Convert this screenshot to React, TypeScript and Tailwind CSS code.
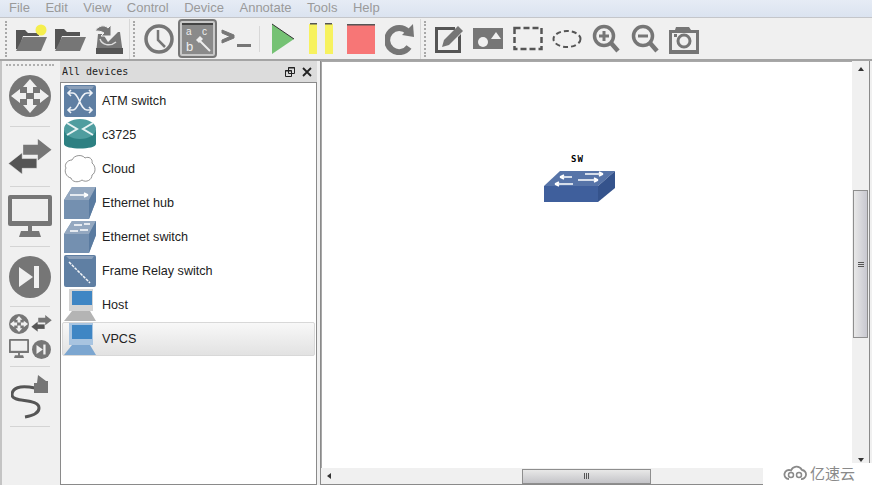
import React from 'react'

const GRAY = '#767676'
const DARK = '#555555'

const menus = ['File', 'Edit', 'View', 'Control', 'Device', 'Annotate', 'Tools', 'Help']

// top toolbar drawings
const NewProject = () => (
  <svg width="34" height="34" viewBox="0 0 34 34">
    <path d="M2 27V8h9l3 3h11v3H9L5 27z" fill={DARK} />
    <path d="M9 15h24l-6 14H2z" fill={GRAY} />
    <circle cx="27" cy="8" r="5.5" fill="#f5ee4d" />
  </svg>
)
const OpenProject = () => (
  <svg width="34" height="34" viewBox="0 0 34 34">
    <path d="M2 27V7h9l3 3h13v4H9L5 27z" fill={DARK} />
    <path d="M9 15h24l-6 14H2z" fill={GRAY} />
  </svg>
)
const SaveProject = () => (
  <svg width="34" height="34" viewBox="0 0 34 34">
    <path d="M4 32l2-20h5l5 8 10-10h2l3 22z" fill={GRAY} />
    <path d="M4 26h27v6H4z" fill={DARK} />
    <path d="M3 9c3-5 9-7 13-3l3-3v11h-10l3-3c-3-2-6-2-9-2z" fill={GRAY} stroke="#f0f0f0" />
    <path d="M8 17c2 6 10 8 16 3" fill="none" stroke="#ddd" strokeWidth="1.5" />
  </svg>
)
const Clock = () => (
  <svg width="34" height="34" viewBox="0 0 34 34">
    <circle cx="17" cy="17" r="13" fill="#f0f0f0" stroke={GRAY} strokeWidth="3.5" />
    <path d="M16 8v10l7 7" fill="none" stroke={GRAY} strokeWidth="2.5" />
  </svg>
)
const Notes = () => (
  <svg width="31" height="31" viewBox="0 0 31 31">
    <rect width="31" height="31" fill="#8a8a8a" />
    <rect width="31" height="2" fill="#444" />
    <text x="4" y="12" fontSize="10" fill="#eee" fontFamily="Liberation Sans">a</text>
    <text x="20" y="12" fontSize="10" fill="#eee" fontFamily="Liberation Sans">c</text>
    <text x="4" y="28" fontSize="13" fill="#eee" fontFamily="Liberation Sans">b</text>
    <path d="M14 17l4-4 3 3-4 4z" fill="#eee" />
    <path d="M18 18l10 10" stroke="#eee" strokeWidth="2" />
  </svg>
)
const Console = () => (
  <svg width="34" height="34" viewBox="0 0 34 34">
    <path d="M2 8l12 5v3L2 21v-3l8-3.500L2 11z" fill={GRAY} stroke={GRAY} />
    <rect x="17" y="22" width="14" height="3" fill={GRAY} />
  </svg>
)
const Play = () => (
  <svg width="26" height="34" viewBox="0 0 26 34">
    <path d="M2 2l22 15L2 32z" fill="#75c274" />
    <path d="M2 2l22 15" stroke="#333" strokeWidth="1" fill="none" />
  </svg>
)
const Pause = () => (
  <svg width="26" height="32" viewBox="0 0 26 32">
    <rect x="0" y="1" width="8" height="30" fill="#f7f25f" />
    <rect x="16" y="1" width="8" height="30" fill="#f7f25f" />
    <rect x="1" y="0" width="7" height="1.500" fill="#555" />
    <rect x="16" y="0" width="7" height="1.500" fill="#555" />
  </svg>
)
const Stop = () => (
  <svg width="28" height="30" viewBox="0 0 28 30">
    <rect width="28" height="30" fill="#f77676" />
    <rect width="28" height="1.500" fill="#555" />
  </svg>
)
const Reload = () => (
  <svg width="30" height="32" viewBox="0 0 30 32">
    <path d="M24 24a12 12 0 1 1-1-15" fill="none" stroke={GRAY} strokeWidth="6" />
    <path d="M17 12L29 14 28 1z" fill={GRAY} />
  </svg>
)
const AddNote = () => (
  <svg width="32" height="32" viewBox="0 0 32 32">
    <path d="M1 4h20v3H4v20h20V14l3-3v19H1z" fill={DARK} />
    <path d="M8 24l2-7L24 3l5 5-14 14z" fill={GRAY} />
  </svg>
)
const AddImage = () => (
  <svg width="32" height="24" viewBox="0 0 32 24">
    <rect width="30" height="21" y="1" fill={GRAY} />
    <circle cx="10" cy="15" r="5" fill="#f0f0f0" />
    <path d="M18 12l5-7 5 7z" fill="#f0f0f0" />
  </svg>
)
const DrawRect = () => (
  <svg width="30" height="26" viewBox="0 0 30 26">
    <rect x="1.500" y="2" width="27" height="21" fill="none" stroke={DARK} strokeWidth="2.500" strokeDasharray="6 3" />
  </svg>
)
const DrawEllipse = () => (
  <svg width="30" height="22" viewBox="0 0 30 22">
    <ellipse cx="15" cy="11" rx="13.500" ry="8" fill="none" stroke={DARK} strokeWidth="2" strokeDasharray="5 3" />
  </svg>
)
const Zoom = ({ plus }: { plus?: boolean }) => (
  <svg width="28" height="30" viewBox="0 0 28 30">
    <circle cx="12" cy="12" r="9.500" fill="#f0f0f0" stroke={GRAY} strokeWidth="3.500" />
    <path d="M19 19l7 8" stroke={GRAY} strokeWidth="4.500" />
    <path d="M7 12h10" stroke={GRAY} strokeWidth="3" />
    {plus && <path d="M12 7v10" stroke={GRAY} strokeWidth="3" />}
  </svg>
)
const Camera = () => (
  <svg width="32" height="30" viewBox="0 0 32 30">
    <path d="M1 6h6l1-3h13l2 3h8v24H1z" fill={GRAY} />
    <rect x="4" y="9" width="24" height="17" fill="#f0f0f0" />
    <circle cx="16" cy="17" r="6" fill="#f0f0f0" stroke={GRAY} strokeWidth="3" />
    <rect x="6" y="10" width="3" height="3" fill={GRAY} />
  </svg>
)

// left toolbar drawings
const RouterIcon = ({ s = 42 }: { s?: number }) => (
  <svg width={s} height={s} viewBox="0 0 42 42">
    <circle cx="21" cy="21" r="21" fill={GRAY} />
    <path d="M21 4l7 8h-4v6h-6v-6h-4zM21 38l7-8h-4v-6h-6v6h-4zM2 21l9-7v4h6v6h-6v4zM40 21l-9-7v4h-6v6h6v4z" fill="#f0f0f0" />
  </svg>
)
const SwitchIcon = ({ s = 44 }: { s?: number }) => (
  <svg width={s} height={s * 0.8} viewBox="0 0 44 36">
    <path d="M15 6h15V0l14 11-14 11v-6H15z" fill={GRAY} />
    <path d="M29 20H14v-6L0 25l14 11v-6h15z" fill={DARK} stroke="#f0f0f0" strokeWidth="0.500" />
  </svg>
)
const MonitorIcon = ({ s = 44 }: { s?: number }) => (
  <svg width={s} height={s} viewBox="0 0 44 44">
    <rect x="0" y="0" width="44" height="31" rx="2" fill={GRAY} />
    <rect x="4" y="4" width="36" height="22" fill="#efefef" />
    <path d="M20 31h4v5h7l2 6H11l2-6h7z" fill={GRAY} />
  </svg>
)
const StartIcon = ({ s = 42 }: { s?: number }) => (
  <svg width={s} height={s} viewBox="0 0 42 42">
    <circle cx="21" cy="21" r="21" fill={GRAY} />
    <path d="M10 11l14 10-14 10z" fill="#f0f0f0" />
    <rect x="25" y="10" width="5" height="22" fill="#f0f0f0" />
  </svg>
)
const CableIcon = () => (
  <svg width="38" height="44" viewBox="0 0 38 44">
    <path d="M24 13C8 10 1 13 1 20c0 8 27 3 27 13 0 6-8 8-14 9" fill="none" stroke={DARK} strokeWidth="3" />
    <path d="M23 8h3L27 0l8 6h2v12H23z" fill={GRAY} />
  </svg>
)

// device icons
const AtmIcon = () => (
  <svg width="32" height="32" viewBox="0 0 32 32">
    <rect width="32" height="32" rx="2" fill="#5f7fa3" />
    <path d="M2 1h28l-2 3H5z" fill="#8ba0ba" />
    <path d="M4 8h5c6 0 7 17 14 17h5M4 25h5c6 0 7-17 14-17h5M25 5l3 3-3 3M25 22l3 3-3 3M7 5L4 8l3 3M7 22l-3 3 3 3" fill="none" stroke="#eef2f7" strokeWidth="1.600" />
  </svg>
)
const RouterDevice = () => (
  <svg width="32" height="32" viewBox="0 0 32 32">
    <path d="M0 11v14c0 6 32 6 32 0V11z" fill="#2d8082" />
    <ellipse cx="16" cy="10" rx="16" ry="10" fill="#4f9d9f" />
    <path d="M3 4l10 6-10 6M29 4l-10 6 10 6" fill="none" stroke="#e8f3f3" strokeWidth="2" />
  </svg>
)
const CloudIcon = () => (
  <svg width="32" height="32" viewBox="0 0 32 32">
    <path d="M8 7c2-5 10-6 13-2 4-2 8 1 7 5 4 3 4 10 0 12 0 5-6 8-10 5-4 3-10 2-11-2-5-1-7-7-5-10-2-3 1-8 6-8z" fill="#fff" stroke="#777" strokeWidth="0.800" />
  </svg>
)
const SlabIcon = ({ arrows }: { arrows?: 'hub' | 'sw' }) => (
  <svg width="32" height="32" viewBox="0 0 32 32">
    <path d="M8 0h24v14l-7 18H0V13z" fill="#7490b0" />
    <path d="M8 0h24l-7 13H0z" fill="#94a8c0" />
    <path d="M25 13l7-13v14l-7 18z" fill="#5a7ba0" />
    {arrows === 'hub' && <path d="M6 8h18M24 8l-4-2M24 8l-4 2" fill="none" stroke="#fff" strokeWidth="1.500" />}
    {arrows === 'sw' && <path d="M10 4h8M26 3h-6M6 10h8M24 9h-8" fill="none" stroke="#fff" strokeWidth="1.500" />}
  </svg>
)
const FrameIcon = () => (
  <svg width="32" height="32" viewBox="0 0 32 32">
    <rect width="32" height="32" rx="2" fill="#5f7fa3" />
    <path d="M2 1h28l-2 3H5z" fill="#8ba0ba" />
    <path d="M5 7l21 21" stroke="#f4f6f9" strokeWidth="1.500" strokeDasharray="3 1" />
  </svg>
)
const HostIcon = ({ tint }: { tint?: boolean }) => (
  <svg width="32" height="32" viewBox="0 0 32 32">
    <path d="M5 0h24v22H5z" fill={tint ? '#a8c4e0' : '#d4d4d4'} />
    <rect x="8" y="2" width="20" height="14" fill="#3f86c4" />
    <path d="M8 22h18l6 10H0z" fill={tint ? '#7ca6d0' : '#b4b4b4'} />
  </svg>
)

const devices: { name: string; icon: React.ReactNode }[] = [
  { name: 'ATM switch', icon: <AtmIcon /> },
  { name: 'c3725', icon: <RouterDevice /> },
  { name: 'Cloud', icon: <CloudIcon /> },
  { name: 'Ethernet hub', icon: <SlabIcon arrows="hub" /> },
  { name: 'Ethernet switch', icon: <SlabIcon arrows="sw" /> },
  { name: 'Frame Relay switch', icon: <FrameIcon /> },
  { name: 'Host', icon: <HostIcon /> },
  { name: 'VPCS', icon: <HostIcon tint /> },
]

const Handle = () => <div className="w-[3px] h-[36px] mx-[3px] border-l-2 border-dotted border-[#a8a8a8]" />
const Sep = () => <div className="h-px mx-[8px] bg-[#d4d4d4]" />
const Tool = ({ children, on }: { children: React.ReactNode; on?: boolean }) => (
  <div className={`w-[39px] h-[39px] flex items-center justify-center rounded ${on ? 'bg-[#c8c8c8] border-2 border-[#777777]' : ''}`}>
    {children}
  </div>
)
const SideSlot = ({ children, h }: { children: React.ReactNode; h: string }) => (
  <div className={`${h} flex items-center justify-center`}>{children}</div>
)

export default function App() {
  return (
    <div className="relative w-[872px] h-[485px] overflow-hidden flex flex-col bg-[#f0f0f0] font-['Liberation_Sans',sans-serif]">
      <div className="h-[18px] shrink-0 flex items-start gap-[15.5px] pl-[9px] text-[13px] leading-[15px] text-[#9a9a9a] bg-gradient-to-b from-[#e6ecf5] to-[#dbe3f0] border-b border-[#c4c6ca]">
        {menus.map((m) => (
          <span key={m}>{m}</span>
        ))}
      </div>

      <div className="h-[43px] shrink-0 flex items-center border-b-2 border-[#a4a4a4] pl-[2px]">
        <Handle />
        <Tool><NewProject /></Tool>
        <Tool><OpenProject /></Tool>
        <Tool><SaveProject /></Tool>
        <div className="w-px h-[40px] bg-[#d8d8d8] ml-[1px]" />
        <Handle />
        <Tool><Clock /></Tool>
        <Tool on><Notes /></Tool>
        <Tool><Console /></Tool>
        <div className="w-px h-[26px] bg-[#d8d8d8] mx-[3px]" />
        <Tool><Play /></Tool>
        <Tool><Pause /></Tool>
        <Tool><Stop /></Tool>
        <Tool><Reload /></Tool>
        <div className="w-px h-[40px] bg-[#d8d8d8] ml-[1px]" />
        <Handle />
        <Tool><AddNote /></Tool>
        <Tool><AddImage /></Tool>
        <Tool><DrawRect /></Tool>
        <Tool><DrawEllipse /></Tool>
        <Tool><Zoom plus /></Tool>
        <Tool><Zoom /></Tool>
        <Tool><Camera /></Tool>
      </div>

      <div className="flex-1 flex min-h-0">
        <div className="w-[60px] shrink-0 flex flex-col border-l-2 border-[#c4c4c4] pr-[2px] pt-[3px]">
          <div className="h-[2px] mx-[4px] border-t-2 border-dotted border-[#b0b0b0]" />
          <SideSlot h="h-[60px]"><RouterIcon /></SideSlot>
          <Sep />
          <SideSlot h="h-[59px]"><SwitchIcon /></SideSlot>
          <Sep />
          <SideSlot h="h-[59px]"><MonitorIcon /></SideSlot>
          <Sep />
          <SideSlot h="h-[59px]"><StartIcon /></SideSlot>
          <Sep />
          <div className="h-[59px] grid grid-cols-2 place-items-center px-[5px] py-[4px]">
            <RouterIcon s={20} />
            <SwitchIcon s={21} />
            <MonitorIcon s={20} />
            <StartIcon s={19} />
          </div>
          <Sep />
          <SideSlot h="h-[59px]"><CableIcon /></SideSlot>
          <Sep />
        </div>

        <div className="w-[257px] shrink-0 flex flex-col">
          <div className="h-[21px] shrink-0 flex items-center justify-between pl-[2px] pr-[5px] bg-[#dcdcdc] font-['DejaVu_Sans_Mono',monospace] text-[10px] text-[#222222]">
            <span>All devices</span>
            <span className="flex items-center gap-[7px]">
              <svg width="10" height="10" viewBox="0 0 10 10">
                <path d="M3.500 .5h6v6h-6zM.5 3.500h6v6h-6z" fill="#dcdcdc" stroke="#222" />
                <path d="M3 1h7M0 4h7" stroke="#222" />
              </svg>
              <svg width="10" height="10" viewBox="0 0 10 10">
                <path d="M1 1l8 8M9 1L1 9" stroke="#222" strokeWidth="1.800" />
              </svg>
            </span>
          </div>
          <div className="flex-1 bg-white border border-[#8a8a8a] flex flex-col pt-px text-[12.6px] text-[#222222]">
            {devices.map((d) => (
              <div
                key={d.name}
                className={`h-[34px] flex items-center gap-[6px] ${d.name === 'VPCS' ? 'bg-gradient-to-b from-[#f8f8f8] to-[#e2e2e2] border border-[#d8d8d8] rounded-[2px] mx-px pl-px' : 'pl-[3px]'}`}
              >
                {d.icon}
                <span>{d.name}</span>
              </div>
            ))}
          </div>
        </div>

        <div className="w-[3px] shrink-0" />

        <div className="w-[550px] shrink-0 flex flex-col border-x border-[#8a8a8a] border-b">
          <div className="flex-1 flex min-h-0">
            <div className="relative flex-1 bg-white border-l border-t border-[#a8a8a8]">
              <div className="absolute left-[222px] top-[92px] flex flex-col items-center">
                <span className="font-['DejaVu_Sans_Mono',monospace] font-bold text-[9px] tracking-[1px] leading-[10px] text-black -ml-[5px]">SW</span>
                <svg className="mt-[4px]" width="72" height="36" viewBox="0 0 72 36">
                  <path d="M0 18L16 3h55L54 18z" fill="#5774a8" />
                  <path d="M0 18h54v16H0z" fill="#3f5f9c" />
                  <path d="M54 18L71 3v17L54 34z" fill="#35538c" />
                  <path d="M16 9h12M16 9l4-2M16 9l4 2M41 6h18M59 6l-4-2M59 6l-4 2M11 16h18M11 16l4-2M11 16l4 2M34 12h20M54 12l-4-2M54 12l-4 2" fill="none" stroke="#fff" strokeWidth="1.600" />
                </svg>
              </div>
            </div>
            <div className="w-[17px] shrink-0 flex flex-col items-center bg-[#f0f0f0]">
              <div className="h-[16px] flex items-center justify-center">
                <div className="w-0 h-0 border-x-[3px] border-x-transparent border-b-[4px] border-b-[#333333]" />
              </div>
              <div className="h-[113px]" />
              <div className="w-[15px] h-[148px] border border-[#8e8e8e] bg-gradient-to-r from-[#e8e8e8] to-[#c8c8d0] flex flex-col items-center justify-center gap-px">
                <div className="w-[6px] h-px bg-[#555555]" />
                <div className="w-[6px] h-px bg-[#555555]" />
                <div className="w-[6px] h-px bg-[#555555]" />
              </div>
              <div className="flex-1" />
              <div className="h-[16px] flex items-center justify-center">
                <div className="w-0 h-0 border-x-[3px] border-x-transparent border-t-[4px] border-t-[#333333]" />
              </div>
            </div>
          </div>
          <div className="h-[16px] shrink-0 flex items-center bg-[#f0f0f0]">
            <div className="w-[16px] flex items-center justify-center">
              <div className="w-0 h-0 border-y-[3px] border-y-transparent border-r-[4px] border-r-[#333333]" />
            </div>
            <div className="w-[185px]" />
            <div className="w-[129px] h-[15px] border border-[#8e8e8e] bg-gradient-to-b from-[#e8e8e8] to-[#c4c4c8] flex items-center justify-center gap-px">
              <div className="w-px h-[6px] bg-[#555555]" />
              <div className="w-px h-[6px] bg-[#555555]" />
              <div className="w-px h-[6px] bg-[#555555]" />
            </div>
          </div>
        </div>
      </div>

      <div className="absolute right-0 bottom-0 w-[109px] h-[22px] bg-white flex items-center gap-[2px] pl-[19px] pb-[4px] text-[15px] leading-none text-[#8a8a8a] font-['Noto_Sans_CJK_SC',sans-serif]">
        <svg width="26" height="16" viewBox="0 0 26 16">
          <path d="M7 15a4.500 4.500 0 1 1 2-8.500C11 2 17 1 20 6a4.500 4.500 0 1 1-1 9" fill="none" stroke="#8a8a8a" strokeWidth="1.800" />
          <circle cx="9" cy="11" r="2.500" fill="none" stroke="#8a8a8a" strokeWidth="1.500" />
          <circle cx="17" cy="11" r="2.500" fill="none" stroke="#8a8a8a" strokeWidth="1.500" />
        </svg>
        <span>亿速云</span>
      </div>
    </div>
  )
}
